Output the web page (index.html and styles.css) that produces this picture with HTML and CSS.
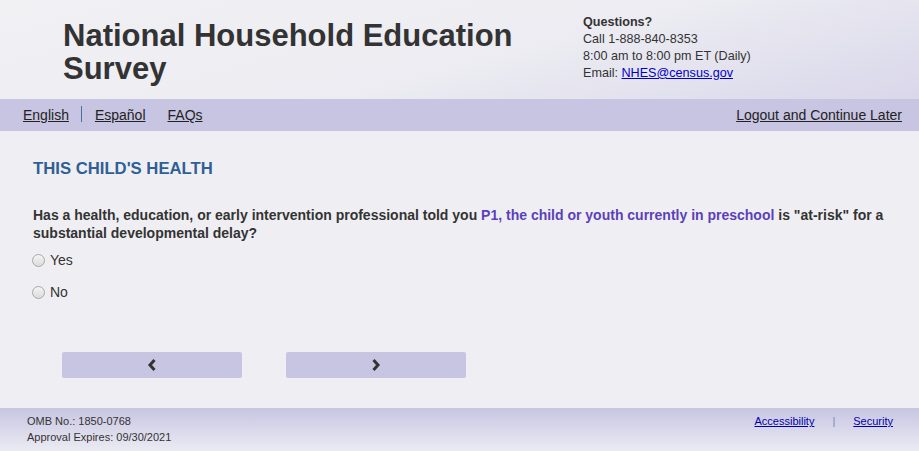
FILE: index.html
```html
<!DOCTYPE html>
<html lang="en">
<head>
<meta charset="utf-8">
<title>National Household Education Survey</title>
<link rel="stylesheet" href="styles.css">
</head>
<body>
<div class="page">
  <header class="header">
    <h1 class="title">National Household Education Survey</h1>
    <div class="contact">
      <div class="contact-q">Questions?</div>
      <div>Call 1-888-840-8353</div>
      <div>8:00 am to 8:00 pm ET (Daily)</div>
      <div>Email: <a class="mail" href="#">NHES@census.gov</a></div>
    </div>
  </header>
  <nav class="nav">
    <div class="nav-left">
      <a href="#" class="nav-link">English</a>
      <span class="nav-sep"></span>
      <a href="#" class="nav-link">Español</a>
      <a href="#" class="nav-link faq">FAQs</a>
    </div>
    <a href="#" class="nav-link">Logout and Continue Later</a>
  </nav>
  <main class="main">
    <h2 class="section">THIS CHILD'S HEALTH</h2>
    <p class="question">Has a health, education, or early intervention professional told you <span class="hl">P1, the child or youth currently in preschool</span> is "at-risk" for a substantial developmental delay?</p>
    <label class="opt"><span class="radio"></span>Yes</label>
    <label class="opt"><span class="radio"></span>No</label>
    <div class="buttons">
      <button class="btn" aria-label="Previous"><svg width="10" height="12" viewBox="0 0 10 12"><path d="M7.5 1 L3 6 L7.5 11" fill="none" stroke="#333" stroke-width="3"/></svg></button>
      <button class="btn" aria-label="Next"><svg width="10" height="12" viewBox="0 0 10 12"><path d="M2.5 1 L7 6 L2.5 11" fill="none" stroke="#333" stroke-width="3"/></svg></button>
    </div>
  </main>
  <footer class="footer">
    <div class="omb">
      <div>OMB No.: 1850-0768</div>
      <div>Approval Expires: 09/30/2021</div>
    </div>
    <div class="flinks">
      <a href="#" class="flink">Accessibility</a>
      <span class="fsep">|</span>
      <a href="#" class="flink">Security</a>
    </div>
  </footer>
</div>
</body>
</html>
```
FILE: styles.css
```css
html, body {
  margin: 0;
  padding: 0;
}
body {
  background: #efeff3;
  font-family: "Liberation Sans", Arial, sans-serif;
  color: #333;
}
.page {
  width: 919px;
  height: 451px;
  display: flex;
  flex-direction: column;
}
.header {
  height: 99px;
  box-sizing: border-box;
  display: flex;
  background: linear-gradient(165deg, #f1f1f4 0%, #ececf2 55%, #d9d7ea 100%);
  padding: 0 0 0 63px;
}
.title {
  margin: 19px 0 0 0;
  width: 520px;
  font-size: 31px;
  line-height: 33px;
  font-weight: bold;
  color: #333;
}
.contact {
  margin: 14px 0 0 0;
  font-size: 12.6px;
  line-height: 17px;
  color: #333;
}
.contact-q {
  font-weight: bold;
}
.mail {
  color: #0000cc;
}
.nav {
  height: 32px;
  background: #c8c5e2;
  display: flex;
  align-items: center;
  justify-content: space-between;
  padding: 0 17px 0 23px;
}
.nav-left {
  display: flex;
  align-items: center;
}
.nav-link {
  color: #222;
  font-size: 14px;
  text-decoration: underline;
}
.nav-sep {
  width: 1px;
  height: 16px;
  background: #4a6ea0;
  margin: 0 13px 2px 12px;
}
.faq {
  margin-left: 22px;
}
.main {
  flex: 1;
  padding: 0 33px;
}
.section {
  margin: 28px 0 0 0;
  font-size: 16.7px;
  line-height: 20px;
  font-weight: bold;
  color: #2f5f95;
}
.question {
  margin: 27px 0 0 0;
  font-size: 14px;
  line-height: 18px;
  font-weight: bold;
  color: #333;
}
.hl {
  color: #5b3fbb;
}
.opt {
  display: flex;
  align-items: center;
  font-size: 14px;
  color: #333;
  height: 20px;
  margin-top: 8px;
  margin-left: -1px;
}
.opt + .opt {
  margin-top: 12px;
}
.radio {
  width: 11px;
  height: 11px;
  border-radius: 50%;
  border: 1px solid #a8a8a8;
  background: linear-gradient(#f4f4f4, #dcdcdc);
  margin-right: 5px;
}
.buttons {
  display: flex;
  gap: 44px;
  margin: 50px 0 0 29px;
}
.btn {
  width: 180px;
  height: 26px;
  border: none;
  border-radius: 2px;
  background: #c8c5e2;
  display: flex;
  align-items: center;
  justify-content: center;
  padding: 0;
}
.footer {
  height: 43px;
  background: linear-gradient(#c8c5e2, #ebebf3);
  display: flex;
  justify-content: space-between;
  padding: 5px 26px 0 27px;
  box-sizing: border-box;
  font-size: 11px;
  line-height: 16px;
  color: #333;
}
.flinks {
  display: flex;
  gap: 0;
}
.flink {
  color: #0000aa;
}
.fsep {
  color: #6a8ab8;
  margin: 0 18px;
}
```
